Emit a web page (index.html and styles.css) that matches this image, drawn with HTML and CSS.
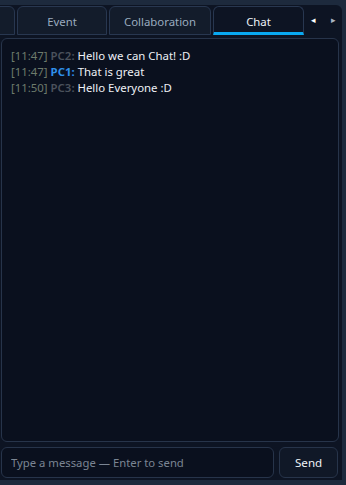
FILE: index.html
```html
<!DOCTYPE html>
<html>
<head>
<meta charset="utf-8">
<link rel="stylesheet" href="styles.css">
</head>
<body>
<div class="frame">
  <div class="tabbar">
    <div class="tabs">
      <div class="tab tab-partial"></div>
      <div class="tab tab-event">Event</div>
      <div class="tab tab-collab">Collaboration</div>
      <div class="tab tab-chat active">Chat</div>
    </div>
    <div class="arrows">
      <span class="arrow">&#9666;</span>
      <span class="arrow dim">&#9656;</span>
    </div>
  </div>
  <div class="log">
    <div class="line"><span class="ts">[11:47]</span> <span class="who gray">PC2:</span> <span class="msg">Hello we can Chat! :D</span></div>
    <div class="line"><span class="ts">[11:47]</span> <span class="who blue">PC1:</span> <span class="msg">That is great</span></div>
    <div class="line"><span class="ts">[11:50]</span> <span class="who gray">PC3:</span> <span class="msg">Hello Everyone :D</span></div>
  </div>
  <div class="composer">
    <input class="input" type="text" placeholder="Type a message — Enter to send">
    <button class="send">Send</button>
  </div>
</div>
</body>
</html>
```
FILE: styles.css
```css
html, body {
  margin: 0;
  padding: 0;
  background: #1d2a3d;
  font-family: "Noto Sans", "Open Sans", sans-serif;
  font-size: 11.4px;
}
body {
  padding: 5px 4px 5px 0;
  height: 475px;
}
.frame {
  height: 475px;
  background: #0d1423;
  border-top-right-radius: 6px;
  display: flex;
  flex-direction: column;
  overflow: hidden;
}
.tabbar {
  display: flex;
  height: 29px;
  margin-top: 1px;
  flex: none;
}
.tabs {
  display: flex;
  gap: 2px;
  width: 305px;
  overflow: hidden;
}
.tab {
  flex: none;
  box-sizing: border-box;
  height: 29px;
  border: 1px solid #283750;
  border-radius: 6px 6px 0 0;
  background: #131c2b;
  color: #9aabbf;
  display: flex;
  align-items: center;
  justify-content: center;
  padding-top: 2px;
}
.tab-partial { width: 90px; margin-left: -75px; }
.tab-event { width: 90px; }
.tab-collab { width: 102px; }
.tab-chat { width: 91px; }
.tab.active {
  background: #0d1423;
  color: #eef3f8;
  border-bottom: 3px solid #09a9f2;
  padding-top: 4px;
}
.arrows {
  flex: 1;
  display: flex;
  align-items: center;
  justify-content: space-between;
  padding: 0 6px 2px 6px;
  color: #ffffff;
  font-size: 9px;
}
.arrow.dim { color: #aab4c0; }
.log {
  box-sizing: border-box;
  height: 404px;
  margin: 3px 3px 0 1px;
  border: 1px solid #27344a;
  border-radius: 6px;
  background: #0a101e;
  padding: 9px 9px;
  flex: none;
  font-size: 11.4px;
}
.line {
  height: 16px;
  line-height: 16px;
  white-space: nowrap;
}
.ts { color: #6d7b6c; }
.who.gray { color: #4b525c; font-weight: 600; }
.who.blue { color: #2f8fea; font-weight: bold; }
.msg { color: #eef1f6; }
.composer {
  display: flex;
  gap: 5px;
  margin: 5px 4px 0 1px;
  height: 31px;
  flex: none;
}
.input {
  box-sizing: border-box;
  width: 274px;
  height: 31px;
  margin: 0;
  border: 1px solid #27344a;
  border-radius: 6px;
  background: #0a101e;
  color: #e0e6ee;
  font-family: inherit;
  font-size: 11.3px;
  padding: 0 9px;
  outline: none;
}
.input::placeholder { color: #7b8593; }
.send {
  box-sizing: border-box;
  width: 59px;
  height: 31px;
  margin: 0;
  border: 1px solid #27344a;
  border-radius: 6px;
  background: #101827;
  color: #eef3f8;
  font-family: inherit;
  font-size: 11.6px;
  padding: 0;
}
```
